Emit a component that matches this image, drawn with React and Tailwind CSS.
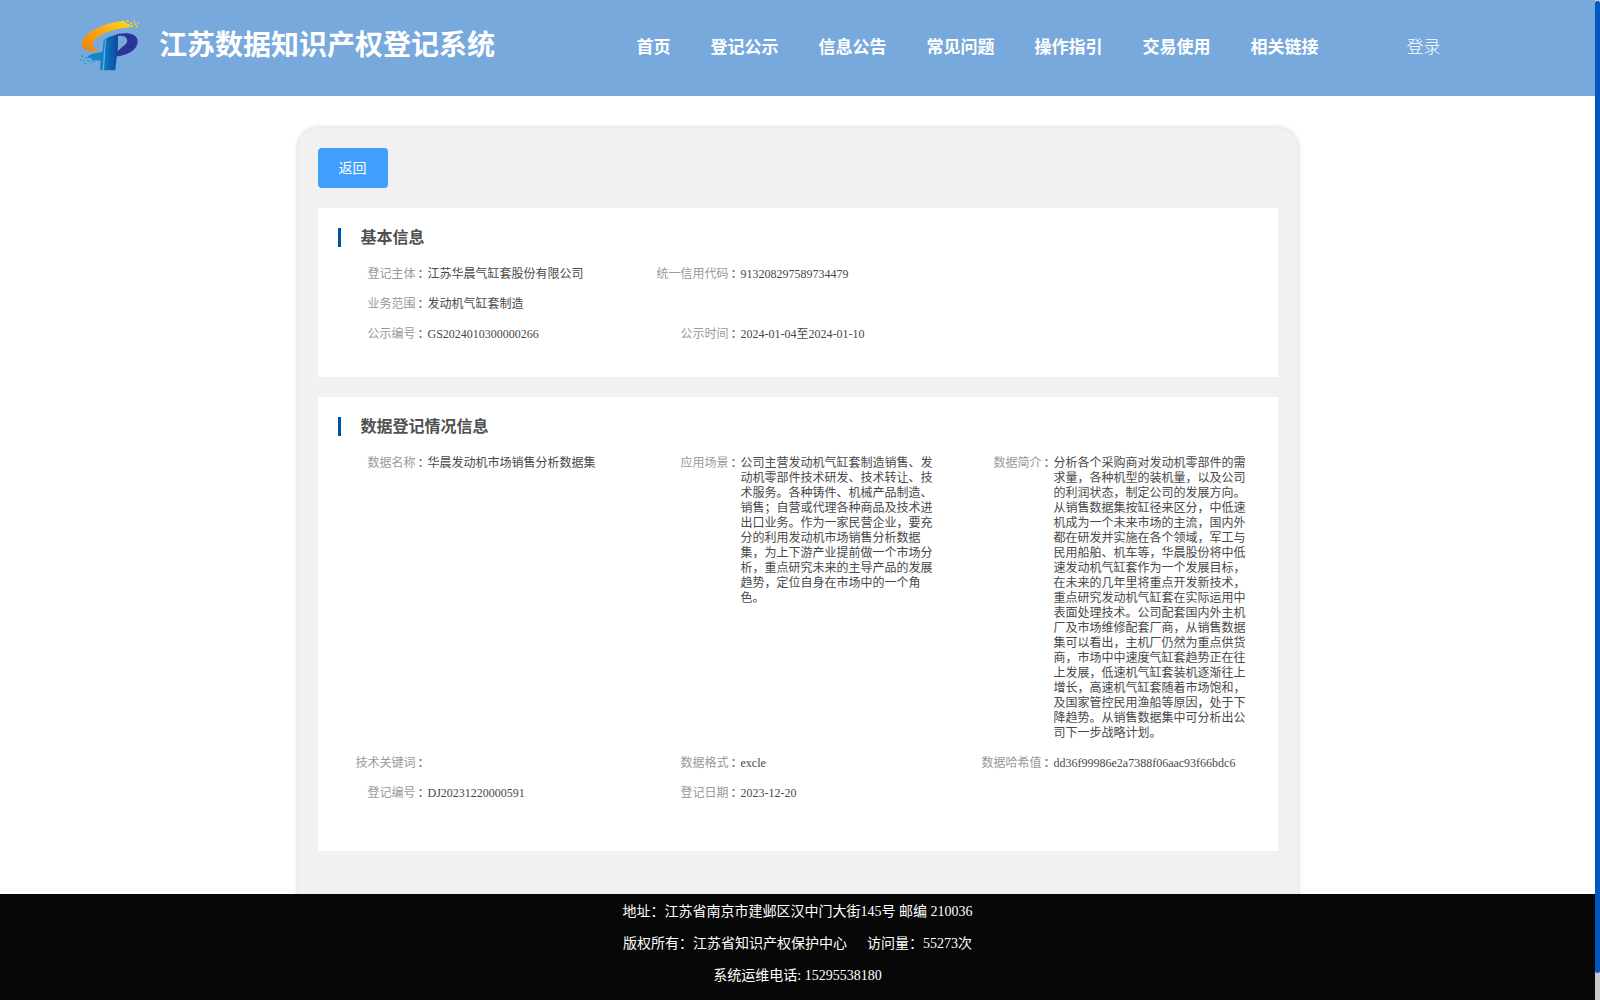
// App.jsx
import React from "react";

const navItems = ["首页", "登记公示", "信息公告", "常见问题", "操作指引", "交易使用", "相关链接"];

const basicInfo = [
  { label: "登记主体", value: "江苏华晨气缸套股份有限公司" },
  { label: "统一信用代码", value: "913208297589734479" },
  null,
  { label: "业务范围", value: "发动机气缸套制造" },
  null,
  null,
  { label: "公示编号", value: "GS2024010300000266" },
  { label: "公示时间", value: "2024-01-04至2024-01-10" },
];

const dataInfo = [
  { label: "数据名称", value: "华晨发动机市场销售分析数据集" },
  {
    label: "应用场景",
    value:
      "公司主营发动机气缸套制造销售、发动机零部件技术研发、技术转让、技术服务。各种铸件、机械产品制造、销售；自营或代理各种商品及技术进出口业务。作为一家民营企业，要充分的利用发动机市场销售分析数据集，为上下游产业提前做一个市场分析，重点研究未来的主导产品的发展趋势，定位自身在市场中的一个角色。",
  },
  {
    label: "数据简介",
    value:
      "分析各个采购商对发动机零部件的需求量，各种机型的装机量，以及公司的利润状态，制定公司的发展方向。从销售数据集按缸径来区分，中低速机成为一个未来市场的主流，国内外都在研发并实施在各个领域，军工与民用船舶、机车等，华晨股份将中低速发动机气缸套作为一个发展目标，在未来的几年里将重点开发新技术，重点研究发动机气缸套在实际运用中表面处理技术。公司配套国内外主机厂及市场维修配套厂商，从销售数据集可以看出，主机厂仍然为重点供货商，市场中中速度气缸套趋势正在往上发展，低速机气缸套装机逐渐往上增长，高速机气缸套随着市场饱和，及国家管控民用渔船等原因，处于下降趋势。从销售数据集中可分析出公司下一步战略计划。",
  },
  { label: "技术关键词", value: "" },
  { label: "数据格式", value: "excle" },
  { label: "数据哈希值", value: "dd36f99986e2a7388f06aac93f66bdc6" },
  { label: "登记编号", value: "DJ20231220000591" },
  { label: "登记日期", value: "2023-12-20" },
];

function Logo() {
  return (
    <svg className="h-[70px] w-20 shrink-0" viewBox="0 0 240 210">
      <defs>
        <linearGradient id="orange" x1="0" x2="1" y1="1" y2="0">
          <stop offset="0" stopColor="#f08000" />
          <stop offset="0.5" stopColor="#f9a51c" />
          <stop offset="1" stopColor="#fddc1c" />
        </linearGradient>
        <linearGradient id="blue" x1="0" x2="1" y1="0" y2="0">
          <stop offset="0" stopColor="#0d7cc4" />
          <stop offset="1" stopColor="#0b4a9c" />
        </linearGradient>
      </defs>
      <path
        d="M164 32C110 36 36 66 36 102C36 120 58 128 94 123C78 121 66 113 69 101C75 77 125 56 186 52L177 46L184 43L168 40Z"
        fill="url(#orange)"
      />
      {/* loose pixels at both ends of the swoosh */}
      <path
        d="M170 31h6v5h-6zM181 36h6v5h-6zM191 31h5v4h-5zM193 40h6v5h-6zM183 45h6v5h-6zM201 36h6v4h-6zM198 47h6v5h-6z"
        fill="#fbd02a"
      />
      <path
        fillRule="evenodd"
        d="M132 76C163 64 203 68 203 94C203 120 172 138 134 140V84ZM144 78C164 74 174 84 171 96C168 104 156 110 143 124Z"
        fill="#2b3597"
      />
      <path d="M108 86Q120 77 143 76L142 124L136 179Q136 181 132 181H102Z" fill="url(#blue)" />
      <path d="M105 87L98 180L90 179L92 152Q77 149 62 151L66 144L50 143L58 135L74 130Q91 129 98 124L101 89Z" fill="#1185c8" />
      <path
        d="M33 136h7v4h-7zM44 141h7v4h-7zM30 148h5v4h-5zM39 150h6v4h-6zM52 149h6v5h-6zM61 155h6v4h-6zM70 151h6v4h-6zM43 159h5v4h-5z"
        fill="#159bdc"
      />
    </svg>
  );
}

function Field({ item }) {
  if (!item) return <div />;
  return (
    <div className="flex">
      <div className="flex h-[15px] w-[90px] shrink-0 justify-end text-[#999]">
        {item.label}
        {/* the traditional form centres the colon in its cell */}
        <span
          lang="zh-TW"
          className="-ml-px w-[13px] font-['Noto_Sans_CJK_TC',sans-serif] leading-[13px] font-medium text-[#777]"
        >
          ：
        </span>
      </div>
      <div className="w-[200px] text-[#484848]">{item.value}</div>
    </div>
  );
}

function Section({ title, items, className }) {
  return (
    <section className={`mt-5 bg-white p-5 ${className}`}>
      <h3 className="flex h-[19px] items-center border-l-[3px] border-[#005398] pl-5 text-base font-bold text-[#505050]">
        {title}
      </h3>
      <div className="mt-5 -mr-5 grid grid-cols-[313px_313px_1fr] gap-y-[15px] text-xs leading-[15px]">
        {items.map((item, i) => (
          <Field key={i} item={item} />
        ))}
      </div>
    </section>
  );
}

export default function App() {
  return (
    <div
      lang="zh-CN"
      className="flex h-screen overflow-hidden bg-white font-['Liberation_Serif','Noto_Sans_CJK_SC',serif]"
    >
      <div className="flex min-w-0 flex-1 flex-col">
        <header className="flex h-24 shrink-0 items-start bg-[#78a9dd] pl-[70px] text-white">
          <div className="mt-2.5">
            <Logo />
          </div>
          <h1 className="mt-[26px] ml-[9px] w-[477.5px] text-[28px] leading-10 font-bold">江苏数据知识产权登记系统</h1>
          <nav className="mt-9 flex gap-10 text-[17px] leading-6 font-bold">
            {navItems.map((name) => (
              <a key={name} href="#">
                {name}
              </a>
            ))}
          </nav>
          <a href="#" className="mt-9 ml-[88px] text-[17px] leading-6 font-light">
            登录
          </a>
        </header>

        <main className="min-h-0 flex-1 overflow-hidden pt-8">
          <div className="mx-auto h-[900px] w-[1000px] rounded-[20px] bg-[#f1f1f1] p-5 shadow-[0_0_5px_rgba(0,0,0,0.2)]">
            <button className="block h-10 w-[70px] rounded bg-[#409eff] pt-px text-sm text-white">返回</button>
            <Section title="基本信息" items={basicInfo} className="h-[169px]" />
            <Section title="数据登记情况信息" items={dataInfo} className="h-[454px]" />
          </div>
        </main>

        <footer className="h-[106px] shrink-0 bg-[#070707] pt-0.5 text-center text-sm leading-8 text-white">
          <p>地址：江苏省南京市建邺区汉中门大街145号 邮编 210036</p>
          <p>
            版权所有：江苏省知识产权保护中心
            <span className="ml-5">访问量：55273次</span>
          </p>
          <p>系统运维电话: 15295538180</p>
        </footer>
      </div>

      {/* scrollbar */}
      <div className="w-[5px] shrink-0 bg-[#c8c8c8]">
        <div className="mt-px h-[972px] rounded-sm bg-[#0058bf]" />
      </div>
    </div>
  );
}
